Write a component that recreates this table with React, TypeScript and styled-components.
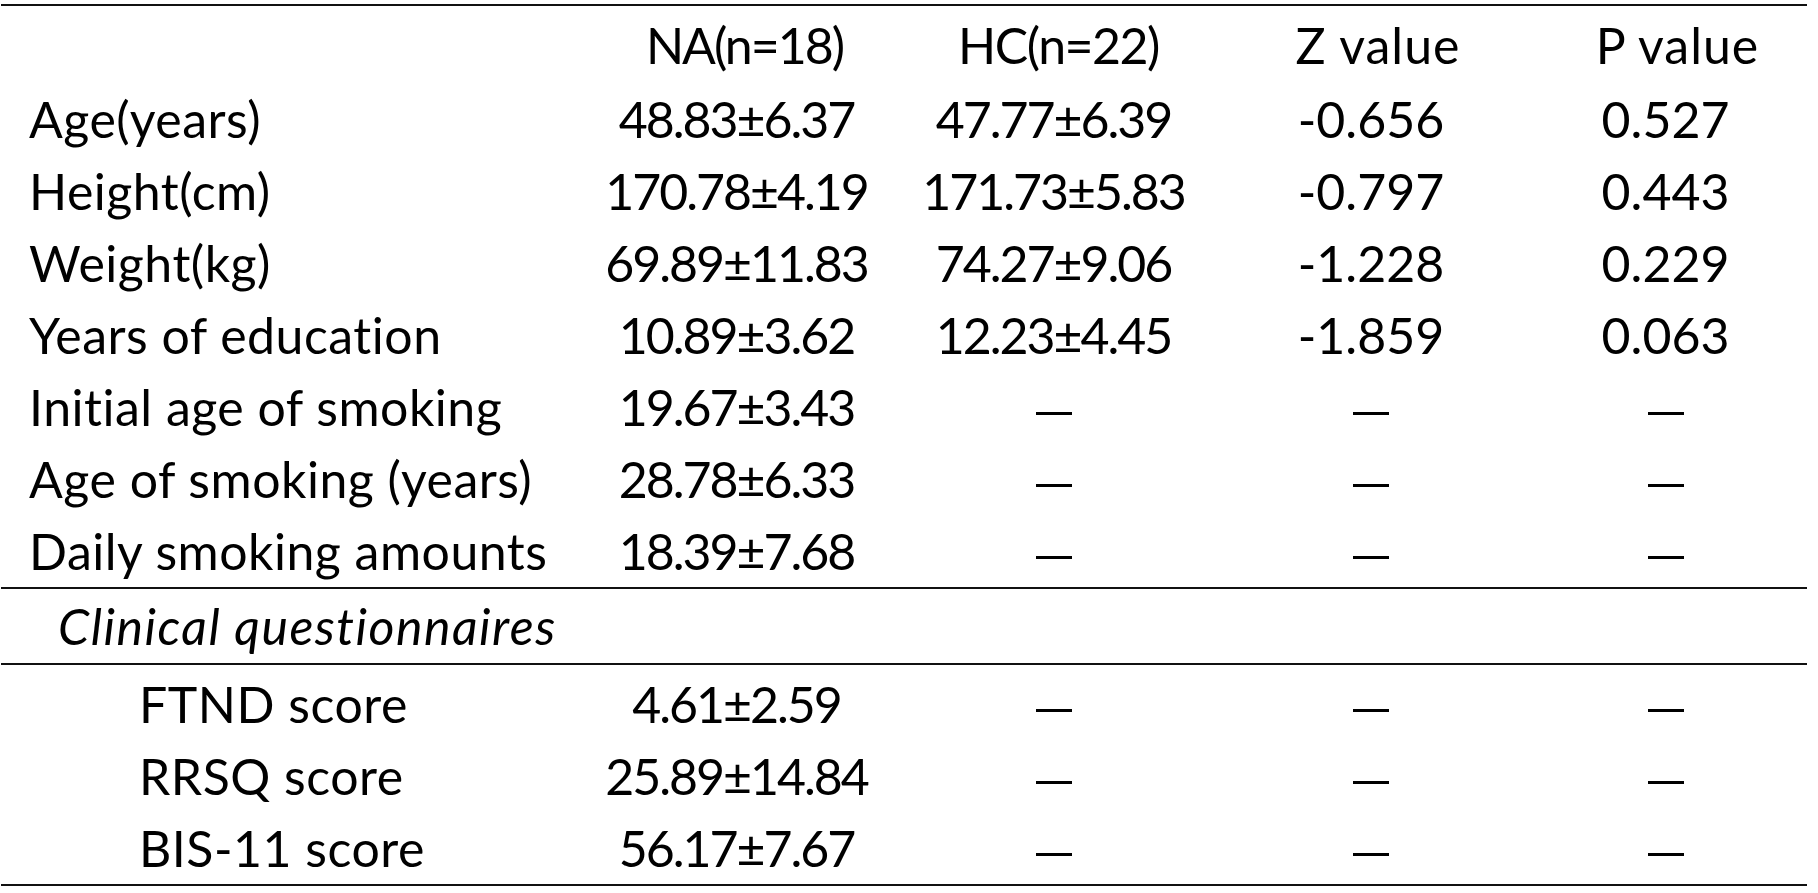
import React from "react";
import styled, { createGlobalStyle } from "styled-components";

const Global = createGlobalStyle`
  html, body { margin: 0; padding: 0; background: #fff; }
  body { font-family: "Lato", "Open Sans", sans-serif; color: #000; }
`;

const Table = styled.div`
  width: 1806px;
  margin-top: 4px;
  margin-left: 1px;
  border-top: 2px solid #111;
  border-bottom: 2px solid #111;
`;

const Section = styled.div<{ $padTop?: number; $divider?: boolean }>`
  padding-top: ${(p) => p.$padTop ?? 0}px;
  border-bottom: ${(p) => (p.$divider ? "2px solid #111" : "none")};
`;

const Row = styled.div<{ $h: number }>`
  display: grid;
  grid-template-columns: 583px 305px 329px 306px 283px;
  height: ${(p) => p.$h}px;
  align-items: center;
  font-size: 50px;
  line-height: 1;
`;

const Label = styled.div<{ $indent: number; $italic?: boolean }>`
  padding-left: ${(p) => p.$indent}px;
  font-style: ${(p) => (p.$italic ? "italic" : "normal")};
  letter-spacing: ${(p) => (p.$italic ? "1.5px" : "0.5px")};
  white-space: nowrap;
`;

const Cell = styled.div<{ $tight?: boolean }>`
  text-align: center;
  white-space: nowrap;
  letter-spacing: ${(p) => (p.$tight ? "-2px" : "0")};
`;

const HeadCell = styled.div<{ $shift: number; $spacing: number }>`
  text-align: center;
  white-space: nowrap;
  padding-left: ${(p) => p.$shift * 2}px;
  letter-spacing: ${(p) => p.$spacing}px;
`;

const Dash = styled.span`
  display: inline-block;
  width: 36px;
  height: 3px;
  background: #000;
  vertical-align: middle;
`;

type R = [string, string, string, string, string];

const demo: R[] = [
  ["Age(years)", "48.83±6.37", "47.77±6.39", "-0.656", "0.527"],
  ["Height(cm)", "170.78±4.19", "171.73±5.83", "-0.797", "0.443"],
  ["Weight(kg)", "69.89±11.83", "74.27±9.06", "-1.228", "0.229"],
  ["Years of education", "10.89±3.62", "12.23±4.45", "-1.859", "0.063"],
  ["Initial age of smoking", "19.67±3.43", "—", "—", "—"],
  ["Age of smoking (years)", "28.78±6.33", "—", "—", "—"],
  ["Daily smoking amounts", "18.39±7.68", "—", "—", "—"],
];

const clinical: R[] = [
  ["FTND score", "4.61±2.59", "—", "—", "—"],
  ["RRSQ score", "25.89±14.84", "—", "—", "—"],
  ["BIS-11 score", "56.17±7.67", "—", "—", "—"],
];

const renderCell = (v: string, i: number) => (
  <Cell key={i} $tight={v.includes("±")}>
    {v === "—" ? <Dash aria-label="—" /> : v}
  </Cell>
);

export default function App() {
  return (
    <>
      <Global />
      <Table>
        <Section>
          <Row $h={77}>
            <Label $indent={28} />
            <HeadCell $shift={8} $spacing={-2}>NA(n=18)</HeadCell>
            <HeadCell $shift={5} $spacing={-1.5}>HC(n=22)</HeadCell>
            <HeadCell $shift={7} $spacing={1}>Z value</HeadCell>
            <HeadCell $shift={12} $spacing={1}>P value</HeadCell>
          </Row>
        </Section>
        <Section $divider>
          {demo.map((r) => (
            <Row $h={72} key={r[0]}>
              <Label $indent={28}>{r[0]}</Label>
              {r.slice(1).map(renderCell)}
            </Row>
          ))}
        </Section>
        <Section $divider>
          <Row $h={74}>
            <Label $indent={57} $italic>
              Clinical questionnaires
            </Label>
          </Row>
        </Section>
        <Section $padTop={3}>
          {clinical.map((r) => (
            <Row $h={72} key={r[0]}>
              <Label $indent={138}>{r[0]}</Label>
              {r.slice(1).map(renderCell)}
            </Row>
          ))}
        </Section>
      </Table>
    </>
  );
}
